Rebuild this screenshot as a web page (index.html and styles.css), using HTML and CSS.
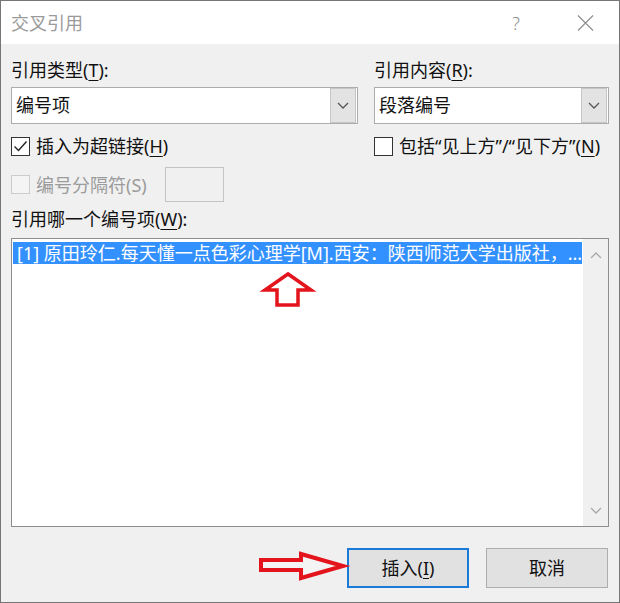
FILE: index.html
```html
<!DOCTYPE html>
<html lang="zh-CN">
<head>
<meta charset="utf-8">
<title>交叉引用</title>
<link rel="stylesheet" href="styles.css">
</head>
<body>
<div class="window">
  <header class="titlebar">
    <span class="title">交叉引用</span>
    <span class="help">?</span>
    <svg class="close" width="17" height="16" viewBox="0 0 17 16"><path d="M1 0.5 L16 15.5 M16 0.5 L1 15.5" stroke="#8f8f8f" stroke-width="1.2" fill="none"/></svg>
  </header>
  <main class="body">
    <div class="top">
      <div class="col">
        <div class="label">引用类型(<u>T</u>):</div>
        <div class="combo">
          <span class="combo-text">编号项</span>
          <span class="combo-btn"><svg width="12" height="7" viewBox="0 0 12 7"><path d="M1 1 L6 6 L11 1" stroke="#555" stroke-width="1.3" fill="none"/></svg></span>
        </div>
        <div class="check">
          <span class="box"><svg width="19" height="19" viewBox="0 0 19 19"><path d="M3.5 9.5 L7.5 13.5 L15.5 4.5" stroke="#222" stroke-width="1.4" fill="none"/></svg></span>
          <span>插入为超链接(<u>H</u>)</span>
        </div>
        <div class="sep-row">
          <div class="check disabled">
            <span class="box"></span>
            <span>编号分隔符(S)</span>
          </div>
          <span class="sep-input"></span>
        </div>
      </div>
      <div class="col">
        <div class="label">引用内容(<u>R</u>):</div>
        <div class="combo">
          <span class="combo-text">段落编号</span>
          <span class="combo-btn"><svg width="12" height="7" viewBox="0 0 12 7"><path d="M1 1 L6 6 L11 1" stroke="#555" stroke-width="1.3" fill="none"/></svg></span>
        </div>
        <div class="check">
          <span class="box"></span>
          <span>包括“见上方”/“见下方”(<u>N</u>)</span>
        </div>
      </div>
    </div>
    <div class="label label-list">引用哪一个编号项(<u>W</u>):</div>
    <div class="listbox">
      <div class="items">
        <div class="item selected">[1] 原田玲仁.每天懂一点色彩心理学[M].西安：陕西师范大学出版社，...</div>
      </div>
      <div class="scrollbar">
        <svg width="12" height="7" viewBox="0 0 12 7"><path d="M1 6 L6 1 L11 6" stroke="#a8a8a8" stroke-width="1.3" fill="none"/></svg>
        <svg width="12" height="7" viewBox="0 0 12 7"><path d="M1 1 L6 6 L11 1" stroke="#a8a8a8" stroke-width="1.3" fill="none"/></svg>
      </div>
    </div>
    <div class="buttons">
      <button class="btn btn-default">插入(<u>I</u>)</button>
      <button class="btn">取消</button>
    </div>
  </main>
  <svg class="overlay" width="620" height="603" viewBox="0 0 620 603">
    <polygon points="288,274 265,290 277,290 277,305 298,305 298,290 311,290" fill="#ffffff" stroke="#e3141b" stroke-width="3.5" stroke-linejoin="miter"/>
    <polygon points="261,560 301,560 301,554 343,566 301,578 301,570 261,570" fill="#f4f4f4" stroke="#e3141b" stroke-width="4" stroke-linejoin="miter"/>
  </svg>
</div>
</body>
</html>
```

FILE: styles.css
```css
* { box-sizing: border-box; }

html, body {
  margin: 0;
  padding: 0;
  background: #f0f0f0;
}

body {
  font-family: "Noto Sans", "Noto Sans CJK SC", sans-serif;
  font-size: 18px;
  color: #111;
}

u {
  text-decoration-thickness: 1px;
  text-underline-offset: 3px;
}

.window {
  position: relative;
  width: 620px;
  height: 603px;
  border: 1px solid #767676;
  background: #f0f0f0;
  display: flex;
  flex-direction: column;
}

.titlebar {
  height: 43px;
  flex: none;
  background: #ffffff;
  display: flex;
  align-items: center;
  padding-left: 10px;
}

.title {
  color: #9a9a9a;
  font-size: 18px;
  line-height: 24px;
}

.help {
  margin-left: auto;
  color: #8f8f8f;
  font-size: 18px;
  font-weight: 300;
  line-height: 24px;
  margin-right: 57px;
}

.close {
  margin-right: 25px;
  display: block;
}

.body {
  flex: 1;
  display: flex;
  flex-direction: column;
  padding: 14px 10px 0 10px;
}

.top {
  display: grid;
  grid-template-columns: 347px 1fr;
  column-gap: 16px;
}

.col {
  display: flex;
  flex-direction: column;
}

.label {
  height: 24px;
  line-height: 24px;
  white-space: nowrap;
}

.combo {
  margin-top: 5px;
  height: 37px;
  border: 1px solid #acacac;
  background: #ffffff;
  display: flex;
  align-items: stretch;
}

.combo-text {
  flex: 1;
  padding-left: 4px;
  line-height: 35px;
}

.combo-btn {
  width: 26px;
  margin: 0 1px 0 0;
  background: #e3e3e3;
  border: 1px solid #c6c6c6;
  display: flex;
  align-items: center;
  justify-content: center;
}

.check {
  margin-top: 10px;
  height: 24px;
  display: flex;
  align-items: center;
  gap: 6px;
  white-space: nowrap;
  line-height: 24px;
}

.box {
  width: 19px;
  height: 19px;
  flex: none;
  border: 1px solid #333333;
  background: #ffffff;
  display: flex;
}

.box svg {
  margin: -1px;
}

.check.disabled {
  margin-top: 0;
  color: #9b9b9b;
}

.check.disabled .box {
  border-color: #cccccc;
  background: #f4f4f4;
}

.sep-row {
  margin-top: 9px;
  height: 35px;
  display: flex;
  align-items: center;
}

.sep-input {
  margin-left: 18px;
  width: 59px;
  height: 35px;
  border: 1px solid #c4c4c4;
  background: #f0f0f0;
}

.label-list {
  margin-top: 5px;
}

.listbox {
  margin-top: 7px;
  height: 289px;
  border: 1px solid #8e8e8e;
  background: #ffffff;
  display: flex;
}

.items {
  flex: 1;
  padding: 3px 1px 0 1px;
  min-width: 0;
}

.item {
  height: 22px;
  line-height: 22px;
  padding-left: 4px;
  white-space: nowrap;
  overflow: hidden;
}

.item.selected {
  background: #3390ff;
  color: #ffffff;
}

.scrollbar {
  width: 25px;
  flex: none;
  background: #f0f0f0;
  display: flex;
  flex-direction: column;
  justify-content: space-between;
  align-items: center;
  padding: 13px 0 12px 0;
}

.buttons {
  margin-top: 21px;
  display: flex;
  justify-content: flex-end;
  gap: 17px;
  padding-right: 1px;
}

.btn {
  width: 122px;
  height: 40px;
  font-family: inherit;
  font-size: 18px;
  color: #111;
  background: #e1e1e1;
  border: 1px solid #adadad;
  padding: 0;
  line-height: 24px;
}

.btn-default {
  border: 2px solid #1a7ad8;
}

.overlay {
  position: absolute;
  left: -1px;
  top: -1px;
  pointer-events: none;
}
```
